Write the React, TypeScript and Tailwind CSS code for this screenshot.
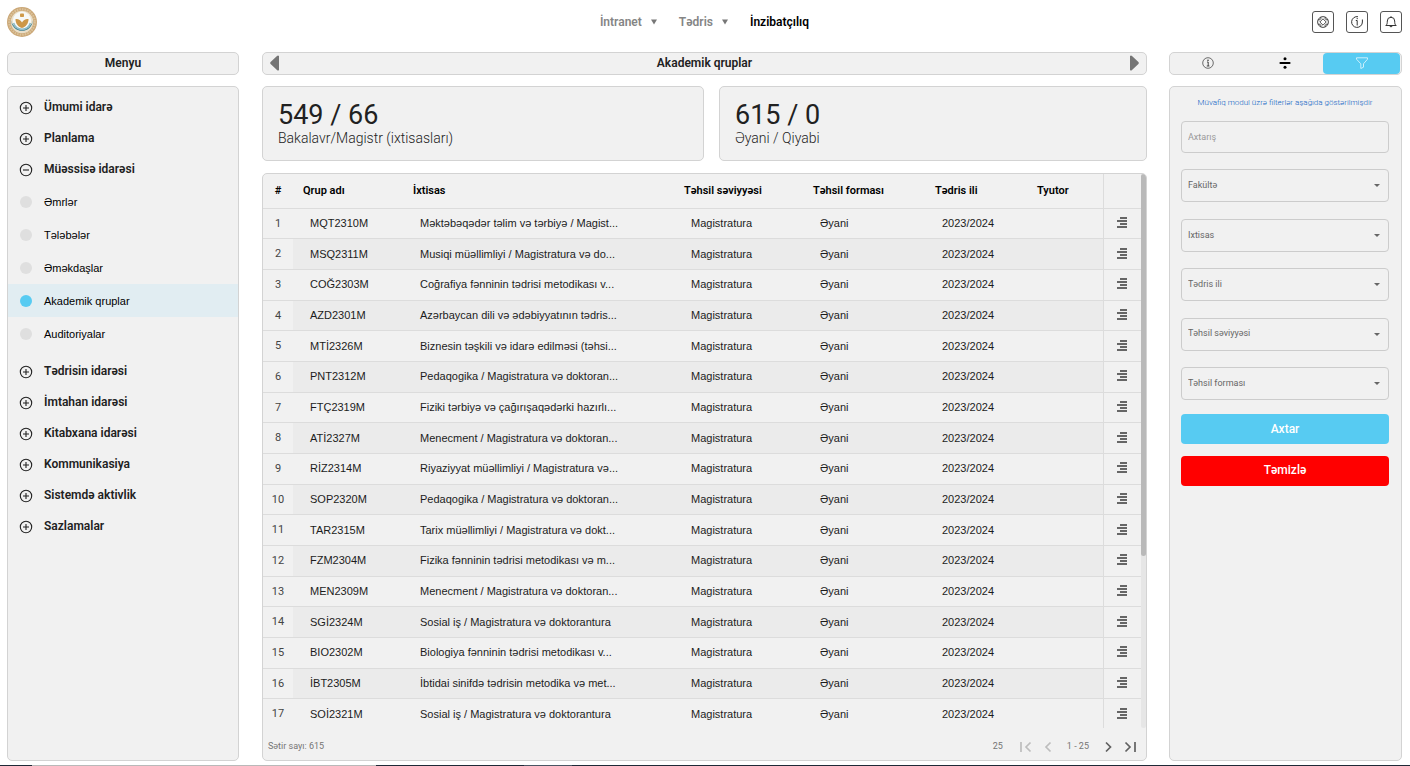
import React from "react";

const groups: [string, string][] = [
  ["MQT2310M", "Məktəbəqədər təlim və tərbiyə / Magist..."],
  ["MSQ2311M", "Musiqi müəllimliyi / Magistratura və do..."],
  ["COĞ2303M", "Coğrafiya fənninin tədrisi metodikası v..."],
  ["AZD2301M", "Azərbaycan dili və ədəbiyyatının tədris..."],
  ["MTİ2326M", "Biznesin təşkili və idarə edilməsi (təhsi..."],
  ["PNT2312M", "Pedaqogika / Magistratura və doktoran..."],
  ["FTÇ2319M", "Fiziki tərbiyə və çağırışaqədərki hazırlı..."],
  ["ATİ2327M", "Menecment / Magistratura və doktoran..."],
  ["RİZ2314M", "Riyaziyyat müəllimliyi / Magistratura və..."],
  ["SOP2320M", "Pedaqogika / Magistratura və doktoran..."],
  ["TAR2315M", "Tarix müəllimliyi / Magistratura və dokt..."],
  ["FZM2304M", "Fizika fənninin tədrisi metodikası və m..."],
  ["MEN2309M", "Menecment / Magistratura və doktoran..."],
  ["SGİ2324M", "Sosial iş / Magistratura və doktorantura"],
  ["BIO2302M", "Biologiya fənninin tədrisi metodikası v..."],
  ["İBT2305M", "İbtidai sinifdə tədrisin metodika və met..."],
  ["SOİ2321M", "Sosial iş / Magistratura və doktorantura"],
];

const subItems = ["Əmrlər", "Tələbələr", "Əməkdaşlar", "Akademik qruplar", "Auditoriyalar"];
const filters = ["Fakültə", "Ixtisas", "Tədris ili", "Təhsil səviyyəsi", "Təhsil forması"];

const panel = "rounded-[5px] border border-[#d3d3d3] bg-[#f1f1f1]";

function Logo() {
  return (
    <svg viewBox="0 0 30 30" className="size-[30px]" aria-hidden="true">
      <circle cx="15" cy="15" r="15" fill="#cba878" />
      <circle cx="15" cy="15" r="12.8" fill="none" stroke="#dcc39b" strokeWidth="2" strokeDasharray="1.6 1" />
      <circle cx="15" cy="15" r="11.2" fill="#eadfc9" />
      <path d="M4.200 13a10.800 10.800 0 0 0 21.600 0 10.800 9 0 0 1-21.600 0z" fill="#3f8194" />
      <circle cx="15" cy="13.800" r="9.200" fill="#f7f9f8" />
      <path d="M6.600 16a8.800 8.800 0 0 0 16.800 0" fill="none" stroke="#8dbcc8" strokeWidth="1.600" />
      <rect x="13" y="6.600" width="4" height="3.400" rx="0.800" fill="#cf9a4a" />
      <path d="M8.400 12.200c2.600-.6 5.200.800 6.600 3.200 1.400-2.400 4-3.800 6.600-3.200-.3 4.400-2.600 7.600-6.600 8.800-4-1.200-6.300-4.400-6.600-8.800z" fill="#cd9747" />
    </svg>
  );
}

function ToggleIcon({ open }: { open?: boolean }) {
  return (
    <svg viewBox="0 0 14 14" className="mt-0.5 size-[14px]" fill="none" stroke="#222" strokeWidth="1.1" aria-hidden="true">
      <circle cx="7" cy="7" r="5.700" />
      <path d={open ? "M4 7h6" : "M4 7h6M7 4v6"} />
    </svg>
  );
}

function MenuGroup({ label, open }: { label: string; open?: boolean }) {
  return (
    <button type="button" aria-expanded={!!open} className="flex h-[31px] w-full items-center gap-[11px] pl-[11px] text-left text-xs font-semibold text-[#212121]">
      <ToggleIcon open={open} />
      <span>{label}</span>
    </button>
  );
}

function Caret() {
  return (
    <svg viewBox="0 0 6 6" className="size-[6px]" fill="#777" aria-hidden="true">
      <path d="M0 .5h6L3 5.500z" />
    </svg>
  );
}

function RowIcon() {
  return (
    <svg viewBox="0 0 10 11" className="h-[11px] w-[10px]" fill="#666" shapeRendering="crispEdges" aria-hidden="true">
      <path d="M3 0h7v2H3zM0 3h10v2H0zM3 6h7v2H3zM0 9h10v2H0z" />
    </svg>
  );
}

function Pager({ d, muted, label }: { d: string; muted?: boolean; label: string }) {
  return (
    <button type="button" aria-label={label} className="flex size-[14px] items-center justify-center">
      <svg viewBox="0 0 14 14" className="size-[14px]" fill="none" stroke={muted ? "#bdbdbd" : "#616161"} strokeWidth="1.700" aria-hidden="true">
        <path d={d} />
      </svg>
    </button>
  );
}

const topButton = "flex size-[22px] items-center justify-center rounded-[3px] border border-[#555]";

function Header() {
  return (
    <header className="grid h-11 shrink-0 grid-cols-[1fr_auto_1fr] items-center pr-2 pl-[7px]">
      <Logo />
      <nav className="flex items-center gap-[22px] text-xs text-[#858585]">
        <a href="#intranet" className="flex items-center gap-[9px] font-semibold">İntranet <Caret /></a>
        <a href="#tedris" className="flex items-center gap-[9px] font-semibold">Tədris <Caret /></a>
        <a href="#inzibatciliq" className="font-semibold text-black">İnzibatçılıq</a>
      </nav>
      <div className="flex justify-end gap-3">
        <button type="button" aria-label="Dəstək" className={topButton}>
          <svg viewBox="0 0 14 14" className="size-[14px]" fill="none" stroke="#333" strokeWidth="0.900">
            <circle cx="7" cy="7" r="5.400" />
            <path d="M7 3.800 10.200 7 7 10.200 3.800 7z" strokeLinejoin="round" />
            <path d="M4.800 2.100v1.700l-1 1H2.100M9.200 2.100v1.700l1 1h1.700M4.800 11.900v-1.700l-1-1H2.100M9.200 11.900v-1.700l1-1h1.700" />
          </svg>
        </button>
        <button type="button" aria-label="Məlumat" className={topButton}>
          <svg viewBox="0 0 14 14" className="size-[14px]" fill="none" stroke="#333" strokeWidth="1">
            <path d="M8 1.700A5.400 5.400 0 1 0 12.400 7V4.500" />
            <path d="M5.800 5.500h1.400v5M7.200 3v1.200" />
          </svg>
        </button>
        <button type="button" aria-label="Bildirişlər" className={topButton}>
          <svg viewBox="0 0 14 14" className="size-[14px]" fill="none" stroke="#333" strokeWidth="1" strokeLinejoin="round">
            <path d="M1.800 10.500c1.300-1 1.500-2 1.500-4.500a3.700 3.700 0 0 1 7.400 0c0 2.500.2 3.500 1.500 4.500zM5.700 10.500a1.300 1.300 0 0 0 2.600 0M7 1.200v1" />
          </svg>
        </button>
      </div>
    </header>
  );
}

function Sidebar() {
  return (
    <aside className="flex min-h-0 flex-col gap-[11px] pr-px">
      <h2 className={`${panel} flex h-[23px] shrink-0 items-center justify-center pb-0.5 text-xs font-semibold text-[#212121]`}>Menyu</h2>
      <nav className={`${panel} flex-1 pt-1`}>
        <MenuGroup label="Ümumi idarə" />
        <MenuGroup label="Planlama" />
        <MenuGroup label="Müəssisə idarəsi" open />
        <ul className="mt-px mb-[5px] font-['Liberation_Sans',Arial,sans-serif] text-[11px] text-black">
          {subItems.map((s) => {
            const active = s === "Akademik qruplar";
            return (
              <li key={s}>
                <a href="#menu" className={`flex h-[33px] items-center gap-3 pl-3 ${active ? "bg-[#e1edf2]" : ""}`}>
                  <span className={`size-3 rounded-full ${active ? "bg-[#57cbf2]" : "bg-[#dfdfdf]"}`} />
                  <span className="pt-0.5">{s}</span>
                </a>
              </li>
            );
          })}
        </ul>
        <MenuGroup label="Tədrisin idarəsi" />
        <MenuGroup label="İmtahan idarəsi" />
        <MenuGroup label="Kitabxana idarəsi" />
        <MenuGroup label="Kommunikasiya" />
        <MenuGroup label="Sistemdə aktivlik" />
        <MenuGroup label="Sazlamalar" />
      </nav>
    </aside>
  );
}

function Stat({ value, label }: { value: string; label: string }) {
  return (
    <div className={`${panel} h-[75px] px-[15px] pt-[13px]`}>
      <p className="text-[27px] leading-[30px] text-[#212121]">{value}</p>
      <p className="text-sm leading-4 font-light text-[#212121]">{label}</p>
    </div>
  );
}

function GroupTable() {
  const th = "pl-[10px] text-left font-semibold whitespace-nowrap";
  const td = "pl-[17px] text-left font-['Liberation_Sans',Arial,sans-serif] whitespace-nowrap";
  return (
    <section className={`${panel} flex min-h-0 flex-1 flex-col overflow-hidden`}>
      <div className="flex min-h-0 flex-1 overflow-hidden">
        <div className="min-w-0 flex-1 overflow-hidden">
          <table className="h-[556px] w-full table-fixed border-collapse text-[11px] text-[#1c1c1c]">
            <colgroup>
              <col className="w-[30px]" />
              <col className="w-[110px]" />
              <col />
              <col className="w-[129px]" />
              <col className="w-[122px]" />
              <col className="w-[102px]" />
              <col className="w-[76px]" />
              <col className="w-[38px]" />
            </colgroup>
            <thead>
              <tr className="h-[34px] border-b border-[#dcdcdc] text-black">
                <th className="text-center font-semibold">#</th>
                <th className={th}>Qrup adı</th>
                <th className={th}>İxtisas</th>
                <th className={th}>Təhsil səviyyəsi</th>
                <th className={th}>Təhsil forması</th>
                <th className={th}>Tədris ili</th>
                <th className={th}>Tyutor</th>
                <th className="border-l border-[#dcdcdc]" aria-label="Əməliyyat" />
              </tr>
            </thead>
            <tbody>
              {groups.map(([code, name], i) => (
                <tr key={code} className="border-b border-[#dcdcdc] even:bg-[#ebebeb]">
                  <td className="bg-[#f1f1f1] pt-px text-center text-[#444]">{i + 1}</td>
                  <td className={td}>{code}</td>
                  <td className={td}>{name}</td>
                  <td className={td}>Magistratura</td>
                  <td className={td}>Əyani</td>
                  <td className={td}>2023/2024</td>
                  <td className={td} />
                  <td className="border-l border-[#dcdcdc] bg-[#f1f1f1]">
                    <button type="button" aria-label="Seçimlər" className="flex w-full items-center justify-center pb-0.5">
                      <RowIcon />
                    </button>
                  </td>
                </tr>
              ))}
            </tbody>
          </table>
        </div>
        <div className="w-[5px] shrink-0 rounded-b bg-[#e6e6e6]">
          <div className="h-[69%] rounded-full bg-[#b9b9b9]" />
        </div>
      </div>
      <footer className="flex h-8 shrink-0 items-center justify-between pt-[5px] pr-[9px] pl-[5px] text-[9px] text-[#757575]">
        <span>Sətir sayı: 615</span>
        <div className="flex items-center gap-2">
          <span className="mr-2">25</span>
          <Pager label="İlk səhifə" muted d="M2 2v10M11.500 2.500 7 7l4.500 4.500" />
          <Pager label="Əvvəlki səhifə" muted d="M9.500 2.500 5 7l4.500 4.500" />
          <span className="mx-1">1 - 25</span>
          <Pager label="Növbəti səhifə" d="M5 2.500 9.500 7 5 11.500" />
          <Pager label="Son səhifə" d="M2.500 2.500 7 7l-4.500 4.500M12 2v10" />
        </div>
      </footer>
    </section>
  );
}

function Main() {
  return (
    <main className="flex min-h-0 min-w-0 flex-col">
      <div className={`${panel} mb-[11px] flex h-[23px] shrink-0 items-center justify-between px-[7px] pb-0.5`}>
        <button type="button" aria-label="Geri">
          <svg viewBox="0 0 9 16" className="h-4 w-[9px]" fill="#757575"><path d="M9 1v14q-1 1-2 0L.6 9q-.8-1 0-2L7 1q1-1 2 0z" /></svg>
        </button>
        <h1 className="text-xs font-semibold text-[#212121]">Akademik qruplar</h1>
        <button type="button" aria-label="İrəli">
          <svg viewBox="0 0 9 16" className="h-4 w-[9px]" fill="#757575"><path d="M0 1v14q1 1 2 0l6.400-6q.8-1 0-2L2 1Q1 0 0 1z" /></svg>
        </button>
      </div>
      <div className="mb-3 grid shrink-0 grid-cols-[442fr_428fr] gap-[15px]">
        <Stat value="549 / 66" label="Bakalavr/Magistr (ixtisasları)" />
        <Stat value="615 / 0" label="Əyani / Qiyabi" />
      </div>
      <GroupTable />
    </main>
  );
}

function Filters() {
  return (
    <aside className="flex min-h-0 flex-col gap-[11px]">
      <div className={`${panel} grid h-[23px] shrink-0 grid-cols-3 pr-px`}>
        <button type="button" aria-label="Məlumat" className="flex items-center justify-center pb-px">
          <svg viewBox="0 0 12 12" className="size-3" fill="none" stroke="#333">
            <circle cx="6" cy="6" r="5.300" strokeWidth="0.700" />
            <path d="M5 5h1.200v4M4.800 9h2.600" strokeWidth="0.900" />
            <circle cx="6" cy="3.200" r="0.700" fill="#111" stroke="none" />
          </svg>
        </button>
        <button type="button" aria-label="Bölmə" className="flex items-center justify-center pb-px">
          <svg viewBox="0 0 12 12" className="size-3" fill="#000">
            <rect x="0.500" y="5" width="11" height="2" rx="0.800" />
            <circle cx="6" cy="1.800" r="1.500" />
            <circle cx="6" cy="10.200" r="1.500" />
          </svg>
        </button>
        <button type="button" aria-label="Filter" className="flex items-center justify-center rounded-[4px] bg-[#57cbf2] pb-px">
          <svg viewBox="0 0 12 12" className="size-3" fill="none" stroke="#e8f8fe" strokeWidth="0.800" strokeLinejoin="round">
            <path d="M.5.800h11v1.400L7.500 6.800v3.400L4.800 11.500V6.800L.5 2.200z" />
          </svg>
        </button>
      </div>
      <form className={`${panel} flex-1 pt-[9px] pr-3 pl-[11px]`} onSubmit={(e) => e.preventDefault()}>
        <p className="text-center text-[8px] leading-[14px] font-light whitespace-nowrap text-[#0d62c4]">Müvafiq modul üzrə filterlər aşağıda göstərilmişdir</p>
        <div className="mt-[11px] flex h-[279px] flex-col justify-between text-[9px] text-[#666]">
          <input type="text" aria-label="Axtarış" placeholder="Axtarış" className="h-8 w-full rounded-[4px] border border-[#ccc] px-1.5 placeholder:text-[#999]" />
          {filters.map((f) => (
            <div key={f} className="relative">
              <select aria-label={f} className="block h-[33px] w-full appearance-none rounded-[4px] border border-[#ccc] px-1.5">
                <option>{f}</option>
              </select>
              <svg viewBox="0 0 6 3" className="pointer-events-none absolute top-[15px] right-[9px] h-[3px] w-[6px]" fill="#666" aria-hidden="true">
                <path d="M0 0h6L3 3z" />
              </svg>
            </div>
          ))}
        </div>
        <button type="submit" className="mt-[14px] h-[30px] w-full rounded-[4px] bg-[#57cbf2] text-xs font-medium text-white">Axtar</button>
        <button type="reset" className="mt-3 h-[30px] w-full rounded-[4px] bg-[#ff0000] pb-0.5 text-xs font-medium text-white">Təmizlə</button>
      </form>
    </aside>
  );
}

export default function App() {
  return (
    <div className="flex h-screen flex-col bg-white font-['Roboto','Liberation_Sans',sans-serif]">
      <Header />
      <div className="grid min-h-0 flex-1 grid-cols-[233px_1fr_233px] grid-rows-[minmax(0,1fr)] gap-[22px] pt-2 pr-2 pb-1 pl-[7px]">
        <Sidebar />
        <Main />
        <Filters />
      </div>
      <div className="flex h-px shrink-0 bg-[#1f2937]">
        <span className="ml-8 w-[344px] bg-[#b9b9b9]" />
        <span className="ml-[148px] w-12 bg-[#4b5563]" />
      </div>
    </div>
  );
}
